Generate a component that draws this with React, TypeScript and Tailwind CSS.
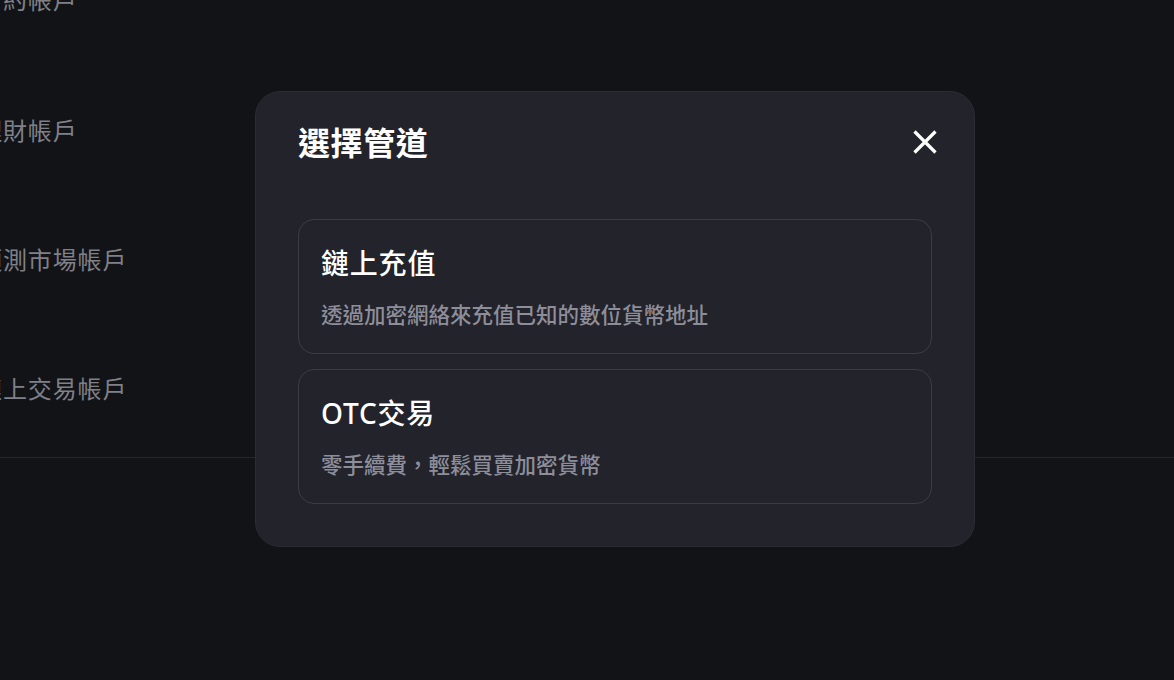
import React from "react";

const font = { fontFamily: '"Noto Sans", "Noto Sans CJK TC", sans-serif' };

function Row({ label }: { label: string }) {
  return (
    <div className="h-[129px] flex items-center">
      <span className="ml-[-22px] text-[24px] leading-[24px] tracking-[0.9px] text-[#7f8088] whitespace-nowrap">{label}</span>
    </div>
  );
}

function Option({ title, desc }: { title: string; desc: string }) {
  return (
    <button className="w-full text-left rounded-[16px] border border-[#3b3c46] bg-[#22232b] px-[22px] pt-[29px] pb-[27px] flex flex-col">
      <span className="text-[28px] leading-[28px] tracking-[0.8px] font-medium text-white">{title}</span>
      <span className="mt-[27px] text-[21.5px] leading-[22px] font-medium text-[#8d8e9a]">{desc}</span>
    </button>
  );
}

export default function App() {
  return (
    <div style={font} className="relative w-[1174px] h-[680px] overflow-hidden bg-[#121317]">
      <div className="flex flex-col mt-[-63px]">
        <div className="h-[129px] flex items-center">
          <span className="ml-[-22px] mt-[-4px] text-[24px] leading-[24px] tracking-[0.9px] text-[#7f8088] whitespace-nowrap">合約帳戶</span>
        </div>
        <Row label="理財帳戶" />
        <Row label="預測市場帳戶" />
        <Row label="鏈上交易帳戶" />
        <div className="mt-[4px] h-px bg-[#26272d]" />
      </div>

      <div className="absolute inset-0 flex items-start pl-[255px] pt-[91px]">
        <div className="w-[720px] rounded-[25px] border border-[#2a2b33] bg-[#22232b] px-[42px] pt-[35px] pb-[42px]">
          <div className="h-[32px] flex items-center justify-between">
            <h2 className="text-[32px] leading-[32px] tracking-[0.6px] font-bold text-white">選擇管道</h2>
            <button className="mr-[-9px] mt-[-2px] w-[32px] h-[32px] flex items-center justify-center text-white">
              <svg width="24" height="24" viewBox="0 0 24 24" fill="none">
                <path d="M1.5 1.5 L22.5 22.5 M22.5 1.5 L1.5 22.5" stroke="white" strokeWidth="3.2" strokeLinecap="butt" />
              </svg>
            </button>
          </div>
          <div className="mt-[60px] flex flex-col gap-[15px]">
            <Option title="鏈上充值" desc="透過加密網絡來充值已知的數位貨幣地址" />
            <Option title="OTC交易" desc="零手續費，輕鬆買賣加密貨幣" />
          </div>
        </div>
      </div>
    </div>
  );
}
